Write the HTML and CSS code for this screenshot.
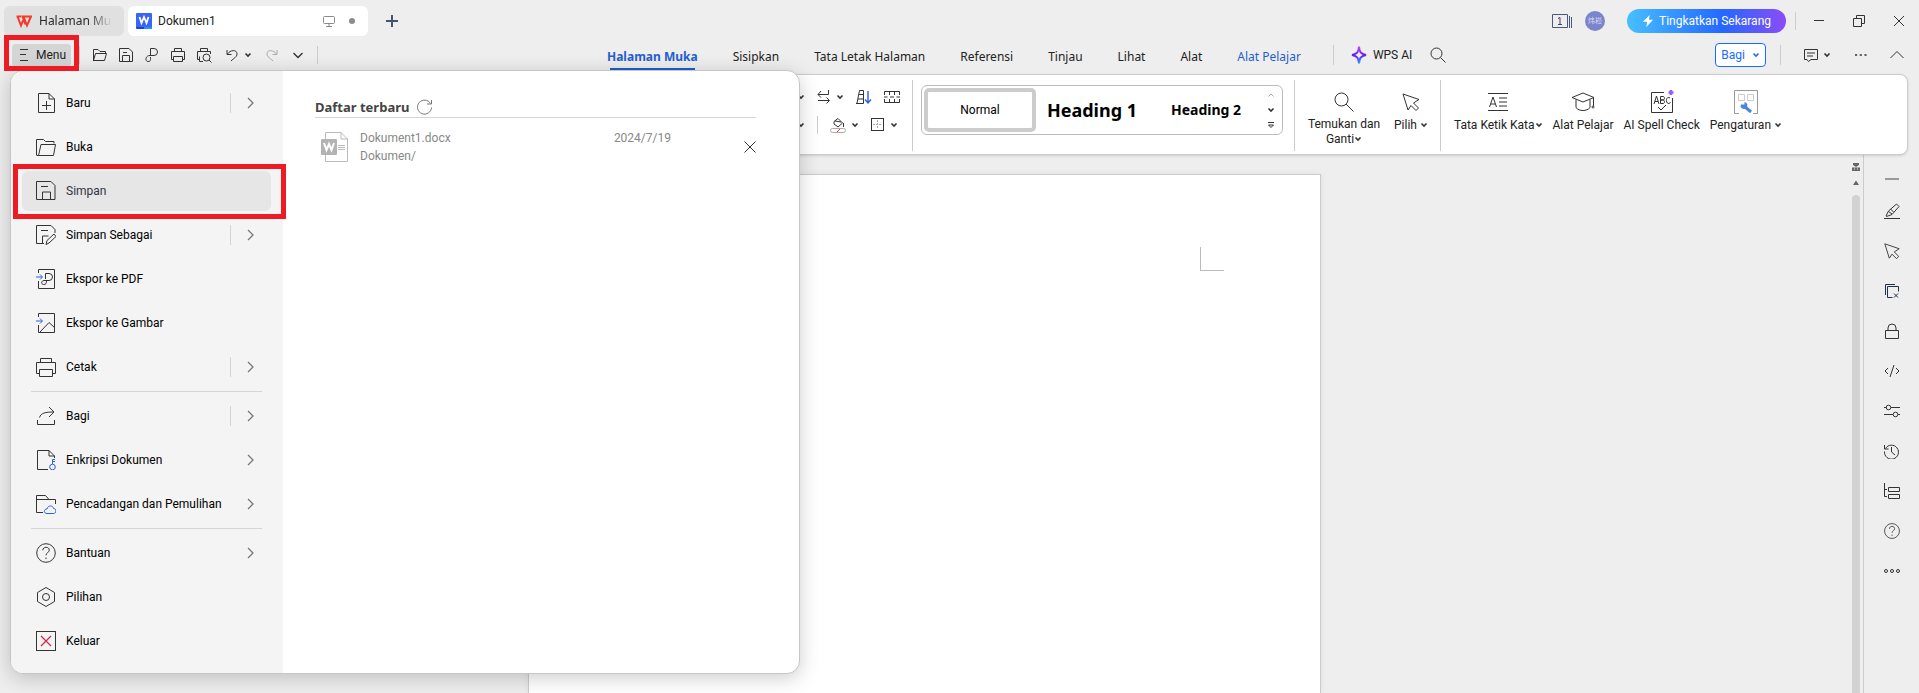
FILE: index.html
```html
<!DOCTYPE html>
<html lang="id">
<head>
<meta charset="utf-8">
<title>Dokumen1</title>
<link rel="stylesheet" href="styles.css">
</head>
<body>
<svg class="defs" width="0" height="0" aria-hidden="true">
  <defs>
    <symbol id="caret" viewBox="0 0 8 8"><path d="M1.500 2.500 4 5l2.500-2.500" stroke-width="1.600"/></symbol>
    <symbol id="chev" viewBox="0 0 12 12"><path d="M4 1l5 5-5 5" stroke-width="1.300"/></symbol>
    <symbol id="save" viewBox="0 0 20 20"><path d="M.5.5h14.500l4 4v14h-18.500zM5 5.500h7M6.500 18v-7h8v7"/></symbol>
    <symbol id="folder" viewBox="0 0 20 20"><path d="M.5 18V2.500h7l2 2h8.500v2M.5 18.500h2L5 7.500h14.500l-2 11h-15"/></symbol>
    <symbol id="print" viewBox="0 0 20 20"><path d="M4.500 5.500v-4h11v4M3.500 16.500h-3v-11h19v11h-3M3.500 12.500h13v7h-13z"/></symbol>
    <symbol id="pointer" viewBox="0 0 20 20"><path d="M2 2l16 5.500-5.500 3.500 5 5-2.500 2.500-5-5-3 4.500z"/></symbol>
    <symbol id="search" viewBox="0 0 20 20"><circle cx="7.500" cy="7.500" r="6.500"/><path d="M12 12l7.500 7.500"/></symbol>
    <symbol id="help" viewBox="0 0 20 20"><circle cx="10" cy="10" r="9.300"/><path d="M6.800 7.300c0-4 6.500-4 6.500-.2 0 2.500-3.300 2.400-3.300 5.200M10 14.500v1.600"/></symbol>
    <linearGradient id="ai" x1="0" y1="0" x2="0" y2="1"><stop offset="0" stop-color="#c04bf5"/><stop offset=".5" stop-color="#6a1bf5"/><stop offset="1" stop-color="#2b9bff"/></linearGradient>
  </defs>
</svg>

<header class="titlebar">
  <button class="tab tab-home"><svg class="i w16" viewBox="0 0 16 12"><path d="M.5 1.500h4.500M1.500 1.500 5 10.500 8 3l3 7.500L15 1.500H6.500l3 8" stroke="#f5392b" stroke-width="2"/></svg><span class="fade">Halaman Mu</span></button>
  <button class="tab tab-doc"><svg class="w16" viewBox="0 0 16 16"><rect width="16" height="16" rx="1" fill="#3a66f5"/><path d="M0 14h8v2H1z" fill="#0d49c9"/><path d="M8 14h8v2H8z" fill="#2b8cff"/><path d="M3.500 4l2 6L8 4l2.500 6 2-6" fill="none" stroke="#fff" stroke-width="1.800"/></svg><span class="grow">Dokumen1</span><svg class="i w12" viewBox="0 0 12 12" stroke="#8a8a8a"><rect x=".5" y="1.500" width="11" height="7" rx="1"/><path d="M6 8.500V11M3 11.500h6"/></svg><i class="dot"></i></button>
  <button class="plain add" aria-label="Tab baru"><svg class="i w12" viewBox="0 0 12 12"><path d="M6 0v12M0 6h12" stroke="#45546f" stroke-width="2"/></svg></button>
  <span class="grow"></span>
  <button class="plain" aria-label="Jendela"><svg class="i win-list" viewBox="0 0 22 16"><path d="M1.500 1.500h15v13h-15zM18.500 3v12M20.500 4v11" stroke="#4a5a7c"/><path d="M7 5.500 9 4.500v7M7 11.500h4" stroke="#4a3a6a"/></svg></button>
  <span class="avatar">炜崧</span>
  <button class="upgrade"><svg class="w12" viewBox="0 0 12 14"><path d="M8 0 0 8h5L4 14l8-8.500H7z" fill="#fff"/></svg>Tingkatkan Sekarang</button>
  <span class="vr"></span>
  <button class="plain win" aria-label="Kecilkan"><svg class="i w12" viewBox="0 0 12 12"><path d="M1 5.500h10"/></svg></button>
  <button class="plain win" aria-label="Pulihkan"><svg class="i w12" viewBox="0 0 12 12"><path d="M.5 3.500h8v8h-8zM3.500 3V.5h8v8H9"/></svg></button>
  <button class="plain win" aria-label="Tutup"><svg class="i w12" viewBox="0 0 12 12"><path d="M1 1l10 10M11 1 1 11"/></svg></button>
</header>

<div class="bar">
  <button class="menu-btn"><svg class="i w12" viewBox="0 0 12 12"><path d="M2 .5h8M2 5.500h6M2 11.500h8"/></svg>Menu</button>
  <span class="vr"></span>
  <div class="quick">
    <button class="plain" aria-label="Buka"><svg class="i w16" viewBox="0 0 16 16"><path d="M1.500 14V2.500H6l2 2h5.500v2M1.500 13.500l2-7h11l-2 7z"/></svg></button>
    <button class="plain" aria-label="Simpan"><svg class="i w16" viewBox="0 0 16 16"><path d="M1.500 1.500h9.500l3.500 3.500v9.500h-13zM5 5.500h4M4.500 14V8.500h7V14"/></svg></button>
    <button class="plain" aria-label="PDF"><svg class="i w16" viewBox="0 0 16 16"><path d="M6.500 8V1.500H10a3.500 3.500 0 0 1 0 7H6c-5 0-5 6-2 6s2.500-2 2.500-4.500"/></svg></button>
    <button class="plain" aria-label="Cetak"><svg class="i w16" viewBox="0 0 16 16"><path d="M4.500 4.500v-3h7v3M3.500 12.500h-2v-8h13v8h-2M3.500 9.500h9v5h-9z"/></svg></button>
    <button class="plain" aria-label="Pratinjau"><svg class="i w16" viewBox="0 0 16 16"><path d="M4.500 4V1.500h7V4M3 12.500H1.500v-8h13V7M3.500 9.500v5H7"/><circle cx="10.500" cy="10.500" r="3.500"/><path d="M13 13l2.500 2.500"/></svg></button>
  </div>
  <button class="plain undo" aria-label="Urungkan"><svg class="i w12" viewBox="0 0 12 12"><path d="M1 1v4.500h4.500M1.500 5C4 1 11 0 11 5c0 3-3 4-6 7"/></svg><svg class="i w8"><use href="#caret"/></svg></button>
  <button class="plain redo" aria-label="Ulangi"><svg class="i w12" viewBox="0 0 12 12" stroke="#aaa"><path d="M11 1v4.500H6.500M10.500 5C8 1 1 0 1 5c0 3 3 4 6 7"/></svg></button>
  <button class="plain more" aria-label="Lainnya"><svg class="i w12" viewBox="0 0 12 12"><path d="M1.500 4 6 8.500 10.500 4" stroke-width="1.400"/></svg></button>
  <span class="vr"></span>
  <nav class="nav">
    <a class="on" href="#">Halaman Muka</a><a href="#">Sisipkan</a><a href="#">Tata Letak Halaman</a><a href="#">Referensi</a><a href="#">Tinjau</a><a href="#">Lihat</a><a href="#">Alat</a><a class="blue" href="#">Alat Pelajar</a>
  </nav>
  <span class="vr tall"></span>
  <button class="plain ai"><svg class="spark" viewBox="0 0 16 20"><path d="M8 1.500C8.500 7 9.500 9 15 10 9.500 11 8.500 13 8 18.500 7.500 13 6.500 11 1 10 6.500 9 7.500 7 8 1.500z" fill="none" stroke="url(#ai)" stroke-width="2"/></svg>WPS AI</button>
  <button class="plain find" aria-label="Cari"><svg class="i w16" viewBox="0 0 16 16"><circle cx="6.500" cy="6.500" r="5.500"/><path d="M10.500 10.500l5 5"/></svg></button>
  <span class="grow"></span>
  <button class="share">Bagi<svg class="i w8" stroke="#1a6cff"><use href="#caret"/></svg></button>
  <span class="vr tall"></span>
  <button class="plain note" aria-label="Komentar"><svg class="i w16" viewBox="0 0 16 16"><path d="M1.500 2.500h13v10H8L5.500 14.500 4 12.500H1.500zM4 6h8M4 9h6"/></svg><svg class="i w8"><use href="#caret"/></svg></button>
  <button class="plain dots" aria-label="Opsi"><svg class="w12" viewBox="0 0 14 4"><path d="M0 1h2.500v2H0zM5.500 1H8v2H5.500zM11 1h2.500v2H11z" fill="#333"/></svg></button>
  <button class="plain fold" aria-label="Ciutkan"><svg class="i w14" viewBox="0 0 14 14"><path d="M.5 10 7 3.500 13.500 10"/></svg></button>
</div>

<section class="ribbon">
  <div class="para">
    <div class="row">
      <svg class="i w8"><use href="#caret"/></svg>
      <button class="plain" aria-label="Arah"><svg class="i w14" viewBox="0 0 14 14"><path d="M11.500 0v4.500H1M4 1 1 4.500 4 7.500M1 10.500h11M9.500 7.500l3 3-3 3"/></svg><svg class="i w8"><use href="#caret"/></svg></button>
      <button class="plain" aria-label="Urutkan"><svg class="i w16" viewBox="0 0 16 14"><path d="M0 13.500h7.500M1 13 3.500.5h4v13M3 4.500h4.500M2 9h5.500"/><path d="M12 1v12M9 9.500l3 3.500 3-3.500" stroke="#2b5fe0" stroke-width="1.400"/></svg></button>
      <button class="plain" aria-label="Kisi"><svg class="i w16" viewBox="0 0 16 14"><path d="M.5 5V1.500h15V5M.5 9v3.500h15V9M5.500 1.500V5M10.500 1.500V5M5.500 9v3.500M10.500 9v3.500M0 7h3.500M6 7h4M12.500 7H16"/></svg></button>
    </div>
    <div class="row">
      <svg class="i w8"><use href="#caret"/></svg>
      <span class="vr"></span>
      <button class="plain" aria-label="Arsiran"><svg class="i w16" viewBox="0 0 16 16"><path d="M4 4.500 8 1.500 12.500 6 8 10 4 7zM5 4l6 1M13.500 6v4"/><rect x=".5" y="11.500" width="15" height="4" rx="2" stroke="#aaa"/><path d="M7 15l3-3" stroke="#e33"/></svg><svg class="i w8"><use href="#caret"/></svg></button>
      <button class="plain" aria-label="Batas"><svg class="i w14" viewBox="0 0 14 14"><rect x=".5" y=".5" width="12" height="12"/><path d="M6.500 2v9M2 6.500h9" stroke="#aaa" stroke-dasharray="2 1"/></svg><svg class="i w8"><use href="#caret"/></svg></button>
    </div>
  </div>
  <span class="vr"></span>
  <div class="styles">
    <button class="style sel">Normal</button><button class="style h1">Heading 1</button><button class="style h2">Heading 2</button>
    <div class="steps">
      <svg class="i w8" viewBox="0 0 8 8"><path d="M1.500 5.500 4 3l2.500 2.500" stroke="#aaa"/></svg>
      <svg class="i w8"><use href="#caret"/></svg>
      <svg class="i w8" viewBox="0 0 8 8"><path d="M1 1.500h6M1.500 4 4 6.500 6.500 4z"/></svg>
    </div>
  </div>
  <span class="vr"></span>
  <button class="tool wrap"><svg class="i w20"><use href="#search"/></svg><span>Temukan dan<br>Ganti<svg class="i w8"><use href="#caret"/></svg></span></button>
  <button class="tool pick"><svg class="i w20"><use href="#pointer"/></svg><span>Pilih <svg class="i w8"><use href="#caret"/></svg></span></button>
  <span class="vr"></span>
  <div class="tools">
  <button class="tool"><svg class="i w20" viewBox="0 0 20 20"><path d="M0 1.500h20M0 18.500h20M11 6h8M11 10h8M11 14h8M1.500 15 5 5l3.500 10M2.500 12h5"/></svg><span>Tata Ketik Kata<svg class="i w8"><use href="#caret"/></svg></span></button>
  <button class="tool"><svg class="i w24" viewBox="0 0 24 24"><path d="M1 7.500 12 3l11 4.500L12 12zM5 9.500v8c3 4 11 4 14 0v-8M22.500 8v8"/><circle cx="22" cy="17" r="1"/></svg><span>Alat Pelajar</span></button>
  <button class="tool"><svg class="i w24" viewBox="0 0 24 24"><path d="M14 2.500H1.500v20h21V8M4 14l2.500-8L9 14M5 11.500h3M10.500 6.500v7H13c2 0 2-3.500 0-3.500h-2.500H13c2 0 2-3.500 0-3.500zM20 8c-4-3-5 6-1 5.500l1.500-1M8 17l3 3 5-5"/><path d="M21 0v5M18.500 2.500h5" stroke="#9b5cf6" stroke-width="2.500"/></svg><span>AI Spell Check</span></button>
  <button class="tool"><svg class="i w24" viewBox="0 0 24 24"><path d="M5 23.500H.5V.5h23v23H19" stroke="#999"/><path d="M4.500 4.500h6v6h-6zM13.500 4.500h6v6h-6z" stroke="#ccc"/><path d="M10 16l7 6" stroke="#4a86d8" stroke-width="3"/><path d="M7 14.500h3.500V12a3.500 3.500 0 1 1-4 4.500z" fill="#4a86d8" stroke="none"/></svg><span>Pengaturan <svg class="i w8"><use href="#caret"/></svg></span></button>
  </div>
</section>

<main class="work">
  <div class="canvas"><article class="page"><i class="corner"></i></article></div>
  <div class="scroll"><svg class="w8" viewBox="0 0 8 8"><path d="M1 0h6v2L4 4 1 2zM0 4.500h8V8H0z" fill="#666"/><path d="M2 6h1M5 6h1" stroke="#eee"/></svg><svg class="w8" viewBox="0 0 8 8"><path d="M1 6h6L4 1.500z" fill="#666"/></svg><i class="thumb"></i></div>
  <aside class="side">
    <button class="plain first" aria-label="Ciutkan"><svg class="i w16" viewBox="0 0 16 16"><path d="M1 8h14" stroke="#999" stroke-width="2"/></svg></button>
    <button class="plain" aria-label="Pena"><svg class="i w16" viewBox="0 0 16 16"><path d="M0 15.500h16M2 13l2.500-5L12.500 1 15 3.500 8 11.500l-5.500 2zM4.500 8.500 8 11M6.500 6l3 3"/></svg></button>
    <button class="plain" aria-label="Pilih"><svg class="i w18"><use href="#pointer"/></svg></button>
    <button class="plain" aria-label="Salin"><svg class="i w16" viewBox="0 0 16 16" stroke="#23304a"><path d="M1.500 12V1.500H11M8.500 14.500H3.500v-11h11v5M10 10.500l4 4M14 10.500l-4 4"/></svg></button>
    <button class="plain" aria-label="Kunci"><svg class="i w16" viewBox="0 0 16 16"><path d="M1.500 7.500h13v8h-13zM4 7.500V5a4 4 0 0 1 8 0v2.500"/></svg></button>
    <button class="plain" aria-label="Kode"><svg class="i w16" viewBox="0 0 16 16"><path d="M4 5 1 8l3 3M12 5l3 3-3 3M10 2 6 14"/></svg></button>
    <button class="plain" aria-label="Setelan"><svg class="i w16" viewBox="0 0 16 16"><path d="M0 4.500h2.500M7 4.500h9M0 11.500h9M14 11.500h2"/><circle cx="4.500" cy="4.500" r="2.300"/><circle cx="11.500" cy="11.500" r="2.300"/></svg></button>
    <button class="plain" aria-label="Riwayat"><svg class="i w16" viewBox="0 0 16 16"><path d="M1.500 5.500a7 7 0 1 1-1 3M.5 2v4h4M7.500 4v5l3.500 3"/></svg></button>
    <button class="plain" aria-label="Struktur"><svg class="i w16" viewBox="0 0 16 16"><path d="M.5 0v13.500H3M.5 6.500H3M4.500 4.500h11v4h-11zM4.500 11.500h11v4h-11z"/></svg></button>
    <button class="plain" aria-label="Bantuan"><svg class="i w16" viewBox="0 0 20 20"><use href="#help"/></svg></button>
    <button class="plain" aria-label="Lainnya"><svg class="i w16" viewBox="0 0 16 16"><circle cx="2" cy="8" r="1.500"/><circle cx="8" cy="8" r="1.500"/><circle cx="14" cy="8" r="1.500"/></svg></button>
  </aside>
</main>

<div class="panel">
  <div class="list">
    <button class="item"><svg class="i w20" viewBox="0 0 20 20"><path d="M13 .5H2.500v19h16V6zM13 .5V6h5.500M10.500 8v9M6 12.500h9"/></svg><span class="grow">Baru</span><i class="bar-v"></i><svg class="i w12" stroke="#777"><use href="#chev"/></svg></button>
    <button class="item"><svg class="i w20"><use href="#folder"/></svg><span class="grow">Buka</span></button>
    <button class="item active"><svg class="i w20"><use href="#save"/></svg><span class="grow">Simpan</span></button>
    <button class="item"><svg class="i w20" viewBox="0 0 20 20"><path d="M8 18.500H.5V.5h14.500l4 4V8M5 5.500h7M6.500 18v-7h6M10 19.500l1-4 7-6.500 2 2.500-7 6.500z"/></svg><span class="grow">Simpan Sebagai</span><i class="bar-v"></i><svg class="i w12" stroke="#777"><use href="#chev"/></svg></button>
    <button class="item"><svg class="i w20" viewBox="0 0 20 20"><path d="M2.500 4V.5h16v19h-16V12M9.500 10V4.500H13a3 3 0 0 1 0 7H8c-3 0-3 4-.5 4s3-1 3-4"/><path d="M0 8h6M4 5.500 6.500 8 4 10.500" stroke="#2b5fe0"/></svg><span class="grow">Ekspor ke PDF</span></button>
    <button class="item"><svg class="i w20" viewBox="0 0 20 20"><path d="M2.500 4V.5h16v19h-16V12M4 19l9-9.500 5.500 5"/><path d="M0 8h6M4 5.500 6.500 8 4 10.500" stroke="#2b5fe0"/></svg><span class="grow">Ekspor ke Gambar</span></button>
    <button class="item"><svg class="i w20"><use href="#print"/></svg><span class="grow">Cetak</span><i class="bar-v"></i><svg class="i w12" stroke="#777"><use href="#chev"/></svg></button>
    <hr>
    <button class="item"><svg class="i w20" viewBox="0 0 20 20"><path d="M1.500 14v4.500h17V14M3.500 11.500C5 7 9 6 18 6M13 1l5 5-5 5"/></svg><span class="grow">Bagi</span><i class="bar-v"></i><svg class="i w12" stroke="#777"><use href="#chev"/></svg></button>
    <button class="item"><svg class="i w20" viewBox="0 0 20 20"><path d="M12 19.500H1.500V.5H13L18.500 6v2M13 .5V6h5.500"/><path d="M16.500 14V9.500h2.500M16.500 11.500H19" stroke="#2b5fe0"/><circle cx="16.500" cy="17" r="2.800" stroke="#2b5fe0"/></svg><span class="grow">Enkripsi Dokumen</span><svg class="i w12" stroke="#777"><use href="#chev"/></svg></button>
    <button class="item"><svg class="i w20" viewBox="0 0 20 20"><path d="M7 18.500H.5v-17h9l3.500 4h6.500V10M.5 5.500H13"/><path d="M11 19.500c-3.500 0-3.500-4.500 0-4.500 1-4 6-4 6.500-.5 3.500 0 3 5 0 5z" stroke="#2b5fe0"/></svg><span class="grow">Pencadangan dan Pemulihan</span><svg class="i w12" stroke="#777"><use href="#chev"/></svg></button>
    <hr>
    <button class="item"><svg class="i w20"><use href="#help"/></svg><span class="grow">Bantuan</span><svg class="i w12" stroke="#777"><use href="#chev"/></svg></button>
    <button class="item"><svg class="i w20" viewBox="0 0 20 20"><path d="M10 .5 18.500 5.500v9L10 19.500 1.500 14.500v-9z"/><circle cx="10" cy="10" r="3.500"/></svg><span class="grow">Pilihan</span></button>
    <button class="item"><svg class="i w20" viewBox="0 0 20 20"><rect x=".5" y=".5" width="19" height="19"/><path d="M5 5l10 10M15 5 5 15" stroke="#d0294e" stroke-width="1.300"/></svg><span class="grow">Keluar</span></button>
  </div>
  <div class="recent">
    <h2>Daftar terbaru<svg class="i w16" viewBox="0 0 16 16" stroke="#777"><path d="M13.500 4.500a7 7 0 1 0 1 4M14.500 1v4H10"/></svg></h2>
    <div class="file">
      <svg class="doc" viewBox="0 0 28 30"><path d="M4.500.5H20L26.500 7v22.500h-22zM20 .5V7h6.500M17 13.500h7M17 15.500h7M17 17.500h7" fill="none" stroke="#bbb"/><rect y="7" width="16" height="16" rx="1" fill="#b3b3b3"/><path d="M3 11l2.500 7L8 12l2.500 6L13 11" fill="none" stroke="#fff" stroke-width="2"/></svg>
      <div>Dokument1.docx<br>Dokumen/</div>
      <time>2024/7/19</time>
      <button class="plain" aria-label="Hapus"><svg class="i w12" viewBox="0 0 12 12"><path d="M.5.5l11 11M11.500.5.5 11.500"/></svg></button>
    </div>
  </div>
</div>
<i class="frame frame-menu"></i>
<i class="frame frame-save"></i>
</body>
</html>
```
FILE: styles.css
```css
* { box-sizing: border-box; }
body {
  margin: 0;
  height: 100vh;
  overflow: hidden;
  display: flex;
  flex-direction: column;
  background: #eee;
  color: #222;
  font: 12px/16px Roboto, "Noto Sans CJK SC", sans-serif;
}
button { font: inherit; color: inherit; border: 0; background: none; padding: 0; cursor: pointer; white-space: nowrap; }
svg { flex: none; display: block; }
.defs { position: absolute; }
.i { fill: none; }
.i:not([stroke]) { stroke: #333; }
.w8 { width: 8px; height: 8px; }
.w12 { width: 12px; height: 12px; }
.w14 { width: 14px; height: 14px; }
.w16 { width: 16px; height: 16px; }
.w18 { width: 18px; height: 18px; }
.w20 { width: 20px; height: 20px; }
.w24 { width: 24px; height: 24px; }
.grow { flex: 1; text-align: left; }
.plain { display: flex; align-items: center; justify-content: center; }
.vr { flex: none; width: 1px; height: 18px; background: #ccc; }
.vr.tall { height: 20px; }

.titlebar { display: flex; align-items: center; height: 36px; padding: 5px 0 0 4px; flex: none; }
.titlebar > * { flex: none; }
.titlebar > .grow { flex: 1; }
.tab { display: flex; align-items: center; height: 30px; border-radius: 6px; }
.tab-home { width: 120px; padding: 0 12px; gap: 7px; background: #e0e0e0; margin-right: 4px; font-family: "Noto Sans", sans-serif; }
.fade { color: transparent; background: linear-gradient(90deg, #222 70%, #d5d5d5); background-clip: text; }
.tab-doc { width: 240px; padding: 0 13px 0 8px; gap: 6px; background: #fff; }
.dot { width: 6px; height: 6px; border-radius: 50%; background: #8c8c8c; margin-left: 8px; }
.add { margin-left: 18px; }
.win-list { width: 22px; height: 16px; }
.avatar { width: 20px; height: 20px; border-radius: 50%; background: #7b85cc; color: #d7dbf5; font-size: 7px; line-height: 20px; text-align: center; margin: 0 22px 0 12px; }
.upgrade { display: flex; align-items: center; gap: 5px; height: 24px; padding: 0 15px; border-radius: 12px; color: #fff; background: linear-gradient(90deg, #47bfff, #2468ff 60%, #8b4cf7); }
.titlebar .vr { margin: 0 3px 0 9px; }
.win { width: 40px; height: 24px; }

.bar { display: flex; align-items: center; height: 38px; padding: 0 12px; flex: none; }
.menu-btn { display: flex; align-items: center; gap: 6px; width: 59px; height: 23px; padding: 0 6px; border-radius: 4px; background: #d5d5d5; margin-right: 8px; }
.quick { display: flex; gap: 10px; margin: 0 14px 0 12px; }
.undo { gap: 6px; }
.redo { margin: 0 14px; }
.more { margin-right: 13px; }
.nav { display: flex; gap: 35px; margin: 0 32px 0 289px; height: 30px; align-items: end; font: 12px/16px "Noto Sans", sans-serif; }
.nav a { color: inherit; text-decoration: none; white-space: nowrap; padding: 0 0 5px; }
.nav .on { color: #1f5fd0; font-weight: 700; position: relative; }
.nav .on::after { content: ""; position: absolute; left: 3px; right: 3px; bottom: 0; height: 2px; background: #1f5fd0; }
.nav .blue { color: #1f5fd0; }
.spark { width: 16px; height: 20px; }
.ai { gap: 6px; margin: 0 18px 0 17px; }
.share { display: flex; align-items: center; gap: 7px; height: 24px; padding: 0 5px; border: 1px solid #1a6cff; border-radius: 4px; background: #fff; color: #1a6cff; margin-right: 14px; }
.note { gap: 4px; margin: 0 24px 0 22px; }
.dots { margin-right: 23px; }
.fold { margin-right: 3px; }

.ribbon { display: flex; align-items: flex-start; flex: none; height: 81px; margin: 0 11px 0 12px; padding: 5px 0 0 784px; background: #fff; border: 1px solid #ccc; border-radius: 8px; box-shadow: 0 1px 3px #0002; position: relative; z-index: 1; }
.ribbon > .vr { height: 71px; }
.para { width: 115px; padding-top: 7px; display: grid; gap: 8px; }
.row { display: flex; align-items: center; gap: 12px; height: 20px; }
.row .plain { gap: 5px; }
.styles { display: flex; width: 362px; height: 50px; margin: 5px 11px 0 8px; padding: 2px; border: 1px solid #bbb; border-radius: 6px; }
.style { width: 112px; height: 44px; color: #000; }
.style.sel { border: 4px solid #ccc; border-radius: 5px; }
.h1 { font: 700 18px/24px "Noto Sans", sans-serif; }
.h2 { font: 700 14px/20px "Noto Sans", sans-serif; margin-left: 2px; }
.steps { flex: 1; display: flex; flex-direction: column; align-items: center; justify-content: space-around; }
.tool { display: flex; flex-direction: column; align-items: center; gap: 3px; padding-top: 10px; }
.tool > svg { height: 24px; }
.tool span svg { display: inline-block; }
.wrap { width: 76px; line-height: 15px; margin: 0 12px 0 11px; }
.pick { margin-right: 12px; }
.tools { display: flex; gap: 10px; margin-left: 13px; }

.work { display: flex; flex: 1; min-height: 0; }
.canvas { flex: 1; padding: 19px 0 0; display: flex; justify-content: center; }
.page { width: 793px; background: #fff; border: 1px solid #ccc; border-bottom: 0; box-shadow: 0 0 6px #0001; display: flex; justify-content: flex-end; padding: 72px 96px 0; }
.corner { width: 24px; height: 24px; border: solid #bbb; border-width: 0 0 1px 1px; }
.scroll { display: flex; flex-direction: column; align-items: center; width: 16px; padding-top: 8px; gap: 8px; border-right: 1px solid #ccc; }
.thumb { width: 8px; flex: 1; background: #d2d2d2; border-radius: 4px 4px 0 0; }
.side { width: 55px; display: flex; flex-direction: column; padding-top: 16px; }
.side .plain { height: 40px; }
.side .first { height: 16px; margin-bottom: 4px; }

.panel { position: absolute; z-index: 2; left: 10px; top: 70px; width: 790px; display: flex; background: #fff; border: 1px solid #c6c6c6; border-radius: 13px; overflow: hidden; box-shadow: 0 4px 20px #0003; }
.list { display: flex; flex-direction: column; width: 272px; padding: 10px 11px; background: #f4f4f4; }
.item { display: flex; align-items: center; gap: 10px; width: 249px; height: 40px; margin: 2px 0; padding: 0 15px 0 14px; border-radius: 6px; color: #000; }
.item.active { background: #e6e6e6; color: #334; }
.list hr { width: 231px; border: 0; border-top: 1px solid #d5d5d5; margin: 2px 9px; }
.bar-v { width: 1px; height: 20px; background: #d5d5d5; margin-right: 3px; }
.recent { flex: 1; padding: 27px 43px 0 32px; }
.recent h2 { display: flex; align-items: center; gap: 8px; margin: 0; padding-bottom: 1px; font: 700 13px/18px "Noto Sans", sans-serif; color: #444; border-bottom: 1px solid #d5d5d5; }
.file { display: flex; align-items: flex-start; padding: 11px 0 0 6px; color: #888; line-height: 18px; }
.doc { width: 28px; height: 30px; margin: 3px 11px 0 0; }
.file time { margin-left: auto; padding-right: 73px; }
.file .plain { height: 36px; }

.frame { position: absolute; z-index: 3; border: 5px solid #ed1c24; pointer-events: none; }
.frame-menu { left: 4px; top: 35px; width: 75px; height: 36px; }
.frame-save { left: 13px; top: 164px; width: 273px; height: 55px; }
```
